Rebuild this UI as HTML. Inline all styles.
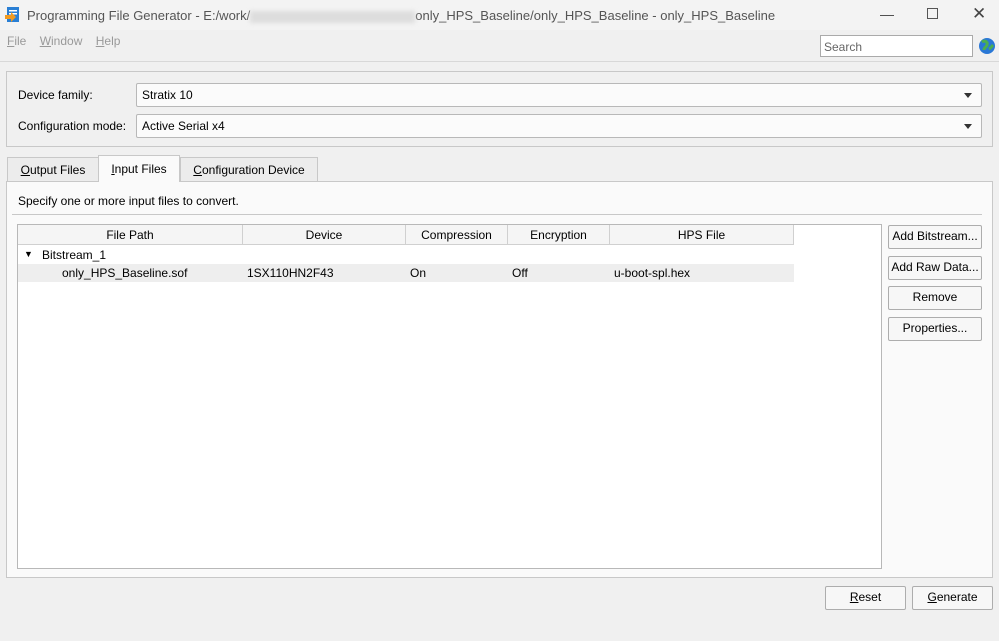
<!DOCTYPE html><html><head><style>
*{box-sizing:border-box;margin:0;padding:0}
body{width:999px;height:641px;background:#f0f0f0;font-family:"Liberation Sans",sans-serif;font-size:12px;color:#000;position:relative;overflow:hidden}
.a{position:absolute}
.btn{position:absolute;border:1px solid #adadad;background:#f7f7f7;border-radius:2px;text-align:center;line-height:21px;font-size:12px}
.combo{position:absolute;background:#fbfbfb;border:1px solid #b8b8b8;border-radius:2px;padding-left:5px;line-height:22px;font-size:12px}
.combo:after{content:"";position:absolute;right:9px;top:9px;border:4px solid transparent;border-top:5px solid #333}
.hd{position:absolute;top:0;height:20px;border-right:1px solid #d0d0d0;border-bottom:1px solid #d0d0d0;background:#f5f5f5;text-align:center;line-height:20px}
</style></head><body>
<div class="a" style="left:0;top:0;width:999px;height:30px;background:#f3f3f3"></div>
<svg class="a" style="left:5px;top:6px" width="18" height="18"><rect x="2" y="1" width="12" height="15" fill="#2a7fd4"/><rect x="4" y="4" width="8" height="1.5" fill="#fff"/><rect x="4" y="7" width="8" height="1.5" fill="#fff"/><path d="M0 9h6v-3l5 5-5 5v-3H0z" fill="#f29a1f"/></svg>
<div class="a" style="left:27px;top:8px;font-size:13px;color:#555;white-space:nowrap">Programming File Generator - E:/work/<span style="display:inline-block;width:165px;height:12px;background:#ddd;vertical-align:middle;filter:blur(2px)"></span>only_HPS_Baseline/only_HPS_Baseline - only_HPS_Baseline</div>
<div class="a" style="left:880px;top:6px;font-size:14px;color:#444">—</div>
<div class="a" style="left:927px;top:8px;width:11px;height:11px;border:1px solid #555"></div>
<div class="a" style="left:972px;top:4px;font-size:17px;color:#444">✕</div>
<div class="a" style="left:7px;top:34px;color:#999;font-size:12px"><u>F</u>ile&nbsp;&nbsp;&nbsp;&nbsp;<u>W</u>indow&nbsp;&nbsp;&nbsp;&nbsp;<u>H</u>elp</div>
<div class="a" style="left:820px;top:35px;width:153px;height:22px;background:#fff;border:1px solid #aaa;padding:4px 3px;color:#666;font-size:12px">Search</div>
<svg class="a" style="left:978px;top:37px" width="18" height="18"><circle cx="9" cy="9" r="8" fill="#2a78d6"/><path d="M4 5c3-2 6 0 5 3s-3 2-3 5M11 12c2-1 3-3 4-4" stroke="#4caf50" stroke-width="3" fill="none"/></svg>
<div class="a" style="left:0;top:61px;width:999px;height:1px;background:#d8d8d8"></div>
<div class="a" style="left:6px;top:71px;width:987px;height:76px;border:1px solid #c8c8c8"></div>
<div class="a" style="left:18px;top:88px">Device family:</div>
<div class="combo" style="left:136px;top:83px;width:846px;height:24px">Stratix 10</div>
<div class="a" style="left:18px;top:119px">Configuration mode:</div>
<div class="combo" style="left:136px;top:114px;width:846px;height:24px">Active Serial x4</div>
<div class="a" style="left:6px;top:181px;width:987px;height:397px;border:1px solid #c8c8c8;background:#fafafa"></div>
<div class="a" style="left:7px;top:157px;width:92px;height:25px;border:1px solid #c8c8c8;background:#ececec;text-align:center;line-height:25px"><u>O</u>utput Files</div>
<div class="a" style="left:98px;top:155px;width:82px;height:27px;border:1px solid #c8c8c8;border-bottom:none;background:#fafafa;text-align:center;line-height:27px"><u>I</u>nput Files</div>
<div class="a" style="left:180px;top:157px;width:138px;height:25px;border:1px solid #c8c8c8;background:#ececec;text-align:center;line-height:25px"><u>C</u>onfiguration Device</div>
<div class="a" style="left:18px;top:194px">Specify one or more input files to convert.</div>
<div class="a" style="left:12px;top:214px;width:970px;height:1px;background:#c8c8c8"></div>
<div class="a" style="left:17px;top:224px;width:865px;height:345px;border:1px solid #b8b8b8;background:#fff">
<div class="hd" style="left:0;width:225px">File Path</div>
<div class="hd" style="left:225px;width:163px">Device</div>
<div class="hd" style="left:388px;width:102px">Compression</div>
<div class="hd" style="left:490px;width:102px">Encryption</div>
<div class="hd" style="left:592px;width:184px">HPS File</div>
<div class="a" style="left:6px;top:24px;font-size:9px">▼</div>
<div class="a" style="left:24px;top:23px">Bitstream_1</div>
<div class="a" style="left:0;top:39px;width:776px;height:18px;background:#eeeeee"></div>
<div class="a" style="left:44px;top:41px">only_HPS_Baseline.sof</div>
<div class="a" style="left:229px;top:41px">1SX110HN2F43</div>
<div class="a" style="left:392px;top:41px">On</div>
<div class="a" style="left:494px;top:41px">Off</div>
<div class="a" style="left:596px;top:41px">u-boot-spl.hex</div>
</div>
<div class="btn" style="left:888px;top:225px;width:94px;height:24px">Add Bitstream...</div>
<div class="btn" style="left:888px;top:256px;width:94px;height:24px">Add Raw Data...</div>
<div class="btn" style="left:888px;top:286px;width:94px;height:24px">Remove</div>
<div class="btn" style="left:888px;top:317px;width:94px;height:24px">Properties...</div>
<div class="btn" style="left:825px;top:586px;width:81px;height:24px"><u>R</u>eset</div>
<div class="btn" style="left:912px;top:586px;width:81px;height:24px"><u>G</u>enerate</div>
</body></html>
